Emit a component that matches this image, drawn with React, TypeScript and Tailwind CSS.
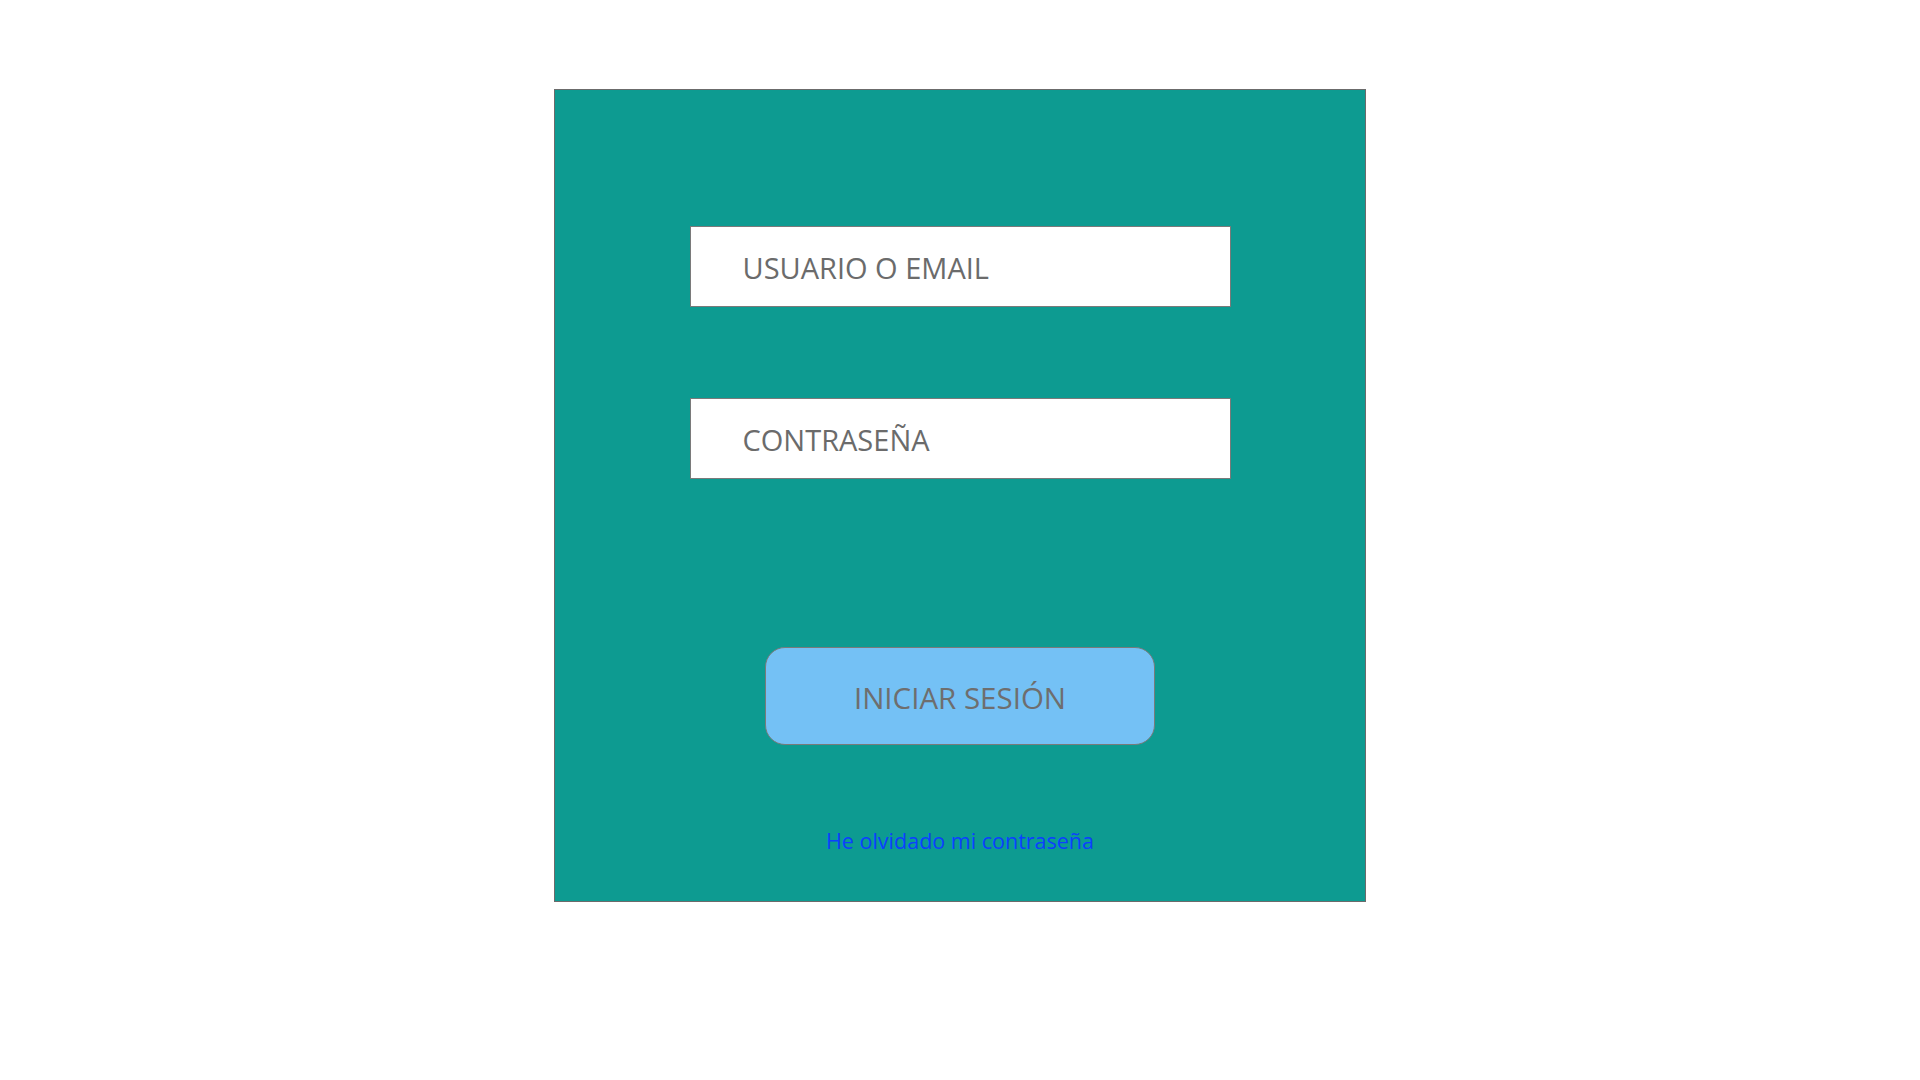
import React from 'react';

const App: React.FC = () => {
  return (
    <div className="min-h-screen bg-white pt-[89px]" style={{ fontFamily: '"Open Sans", "Noto Sans", sans-serif' }}>
      <div className="mx-auto flex h-[813px] w-[812px] flex-col items-center border border-[#6b6b6b] bg-[#0d9b91] pt-[136px]">
        <input
          type="text"
          placeholder="USUARIO O EMAIL"
          className="h-[81px] w-[541px] border border-[#7a7a7a] bg-white pt-[2px] pl-[52px] text-[29px] text-[#6b6b6b] outline-none placeholder:text-[#6b6b6b]"
        />
        <input
          type="password"
          placeholder="CONTRASEÑA"
          className="mt-[91px] h-[81px] w-[541px] border border-[#7a7a7a] bg-white pt-[2px] pl-[52px] text-[29px] text-[#6b6b6b] outline-none placeholder:text-[#6b6b6b]"
        />
        <button className="mt-[168px] flex h-[98px] w-[390px] items-center justify-center rounded-[20px] border border-[#7a7a7a] bg-[#74c1f5] pt-[4px] text-[29.5px] text-[#6e6e6e]">
          INICIAR SESIÓN
        </button>
        <a href="#" className="mt-[80px] text-[21.5px] text-[#0b40ff]">
          He olvidado mi contraseña
        </a>
      </div>
    </div>
  );
};

export default App;
